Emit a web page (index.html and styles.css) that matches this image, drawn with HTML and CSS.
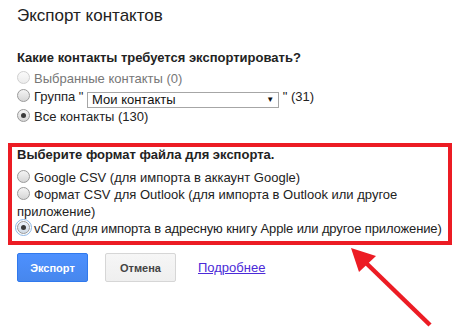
FILE: index.html
```html
<!DOCTYPE html>
<html lang="ru">
<head>
  <meta charset="UTF-8">
  <meta name="viewport" content="width=device-width, initial-scale=1.0">
  <title>Экспорт контактов</title>
  <link rel="stylesheet" href="styles.css">
</head>
<body>

<div class="dialog">
  <h1 class="title">Экспорт контактов</h1>

  <div class="section">
    <div class="section-title">Какие контакты требуется экспортировать?</div>
    <label class="option disabled"><span class="radio"></span>Выбранные контакты (0)</label>
    <label class="option"><span class="radio"></span>Группа " <span class="select">Мои контакты<span class="caret">▼</span></span> " (31)</label>
    <label class="option"><span class="radio checked"></span>Все контакты (130)</label>
  </div>

  <div class="section format">
    <div class="section-title">Выберите формат файла для экспорта.</div>
    <label class="option"><span class="radio"></span>Google CSV (для импорта в аккаунт Google)</label>
    <label class="option"><span class="radio"></span>Формат CSV для Outlook (для импорта в Outlook или другое приложение)</label>
    <label class="option nowrap"><span class="radio checked focus"></span>vCard (для импорта в адресную книгу Apple или другое приложение)</label>
  </div>

  <div class="actions">
    <button class="btn btn-primary">Экспорт</button>
    <button class="btn">Отмена</button>
    <a class="more" href="#">Подробнее</a>
  </div>
</div>

<svg class="arrow" width="461" height="330" viewBox="0 0 461 330">
  <line x1="430" y1="325" x2="364" y2="261" stroke="#ec1c24" stroke-width="4.5" />
  <polygon points="351,248 376,256 359,272" fill="#ec1c24" />
</svg>

</body>
</html>
```

FILE: styles.css
```css
body {
  font-family: "Liberation Sans", Arial, sans-serif;
  font-size: 13px;
  margin: 0;
  padding: 0;
  background-color: #fff;
  color: #222;
}
.dialog {
  padding: 0 9px 0 8px;
}
.title {
  font-size: 17px;
  font-weight: normal;
  line-height: 20px;
  margin: 6px 0 0;
  padding-left: 9px;
}
.section {
  margin-top: 23px;
  padding-left: 9px;
}
.section-title {
  font-weight: bold;
  line-height: 18px;
  margin-bottom: 3px;
}
.option {
  display: block;
  line-height: 18px;
}
.option.disabled {
  color: #777;
}
.option.nowrap {
  white-space: nowrap;
  letter-spacing: -0.12px;
}
.radio {
  display: inline-block;
  width: 11px;
  height: 11px;
  border: 1px solid #9a9a9a;
  border-radius: 50%;
  background: linear-gradient(#f4f4f4, #d6d6d6);
  margin-right: 4px;
  vertical-align: -1px;
  position: relative;
}
.disabled .radio {
  border-color: #cfcfcf;
  background: linear-gradient(#fafafa, #ececec);
}
.radio.checked::after {
  content: "";
  position: absolute;
  left: 3px;
  top: 3px;
  width: 5px;
  height: 5px;
  border-radius: 50%;
  background: #3a3a3a;
}
.radio.focus {
  outline: 1px solid #8cb6e4;
  outline-offset: 1px;
  background: linear-gradient(#eef4fb, #cfd9e4);
}
.select {
  display: inline-flex;
  justify-content: space-between;
  align-items: center;
  width: 182px;
  height: 14px;
  padding: 0 4px;
  border: 1px solid #a6a6a6;
  background: #fff;
  color: #111;
  vertical-align: -3px;
  line-height: 14px;
}
.caret {
  font-size: 8px;
  color: #111;
}
.format {
  margin-top: 17px;
  padding: 0 2px 4px 5px;
  border: 4px solid #ec1c24;
}
.format .section-title {
  line-height: 16px;
  margin-bottom: 6px;
}
.format .option {
  line-height: 17px;
}
.actions {
  display: flex;
  align-items: center;
  margin-top: 8px;
  padding-left: 9px;
}
.btn {
  font-family: "Liberation Sans", Arial, sans-serif;
  font-size: 11px;
  font-weight: bold;
  height: 29px;
  min-width: 71px;
  padding: 0 12px;
  border: 1px solid #d6d6d6;
  border-radius: 2px;
  background: linear-gradient(#f6f6f6, #efefef);
  color: #444;
  margin-right: 17px;
}
.btn-primary {
  background: linear-gradient(#4d90fe, #4787ed);
  border-color: #3079ed;
  color: #fff;
}
.more {
  margin-left: 5px;
  color: #4b2ad8;
  font-size: 13px;
}
.arrow {
  position: absolute;
  left: 0;
  top: 0;
  pointer-events: none;
}
```
